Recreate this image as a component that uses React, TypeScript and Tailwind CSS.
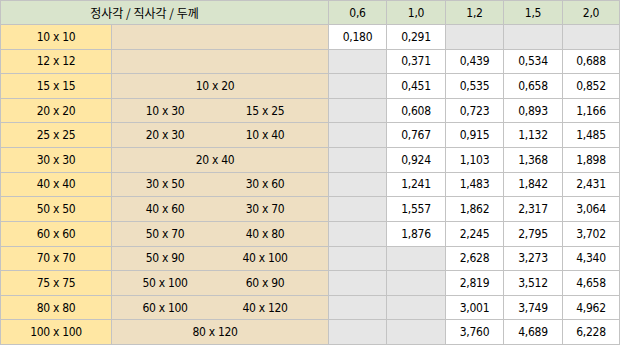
import React from 'react';

type Row = {
  size: string;
  rect: string[];
  values: (string | null)[];
};

const ROWS: Row[] = [
  { size: '10 x 10', rect: [], values: ['0,180', '0,291', null, null, null] },
  { size: '12 x 12', rect: [], values: [null, '0,371', '0,439', '0,534', '0,688'] },
  { size: '15 x 15', rect: ['10 x 20'], values: [null, '0,451', '0,535', '0,658', '0,852'] },
  { size: '20 x 20', rect: ['10 x 30', '15 x 25'], values: [null, '0,608', '0,723', '0,893', '1,166'] },
  { size: '25 x 25', rect: ['20 x 30', '10 x 40'], values: [null, '0,767', '0,915', '1,132', '1,485'] },
  { size: '30 x 30', rect: ['20 x 40'], values: [null, '0,924', '1,103', '1,368', '1,898'] },
  { size: '40 x 40', rect: ['30 x 50', '30 x 60'], values: [null, '1,241', '1,483', '1,842', '2,431'] },
  { size: '50 x 50', rect: ['40 x 60', '30 x 70'], values: [null, '1,557', '1,862', '2,317', '3,064'] },
  { size: '60 x 60', rect: ['50 x 70', '40 x 80'], values: [null, '1,876', '2,245', '2,795', '3,702'] },
  { size: '70 x 70', rect: ['50 x 90', '40 x 100'], values: [null, null, '2,628', '3,273', '4,340'] },
  { size: '75 x 75', rect: ['50 x 100', '60 x 90'], values: [null, null, '2,819', '3,512', '4,658'] },
  { size: '80 x 80', rect: ['60 x 100', '40 x 120'], values: [null, null, '3,001', '3,749', '4,962'] },
  { size: '100 x 100', rect: ['80 x 120'], values: [null, null, '3,760', '4,689', '6,228'] },
];

const THICKNESS = ['0,6', '1,0', '1,2', '1,5', '2,0'];

export default function App() {
  return (
    <div
      className="w-[620px] h-[345px] bg-[#c3c3c3] p-px text-[12px] text-black tracking-[-0.3px]"
      style={{ fontFamily: '"Liberation Sans Narrow", "DejaVu Sans Condensed", "Noto Sans CJK KR", sans-serif' }}
    >
      <div className="grid h-full gap-px grid-cols-[110px_216px_57px_58px_57px_58px_1fr] grid-rows-[23px_repeat(13,1fr)]">
        {/* header */}
        <div className="col-span-2 bg-[#d9e4cc] flex items-center justify-center pr-[40px] tracking-normal font-['Noto_Sans_CJK_KR',sans-serif]">
          정사각 / 직사각 / 두께
        </div>
        {THICKNESS.map((t) => (
          <div key={t} className="bg-[#d9e4cc] flex items-center justify-center">
            {t}
          </div>
        ))}

        {ROWS.map((row) => (
          <React.Fragment key={row.size}>
            <div className="bg-[#ffe7a3] flex items-center justify-center">{row.size}</div>
            {row.rect.length === 2 ? (
              <div className="bg-[#eedfc2] flex items-center">
                <span className="w-[106px] text-center">{row.rect[0]}</span>
                <span className="w-[94px] text-center">{row.rect[1]}</span>
              </div>
            ) : (
              <div className="bg-[#eedfc2] flex items-center justify-center pr-[10px]">{row.rect[0]}</div>
            )}
            {row.values.map((v, i) =>
              v ? (
                <div key={i} className="bg-white flex items-center justify-center">
                  {v}
                </div>
              ) : (
                <div key={i} className="bg-[#e6e6e6]" />
              )
            )}
          </React.Fragment>
        ))}
      </div>
    </div>
  );
}
